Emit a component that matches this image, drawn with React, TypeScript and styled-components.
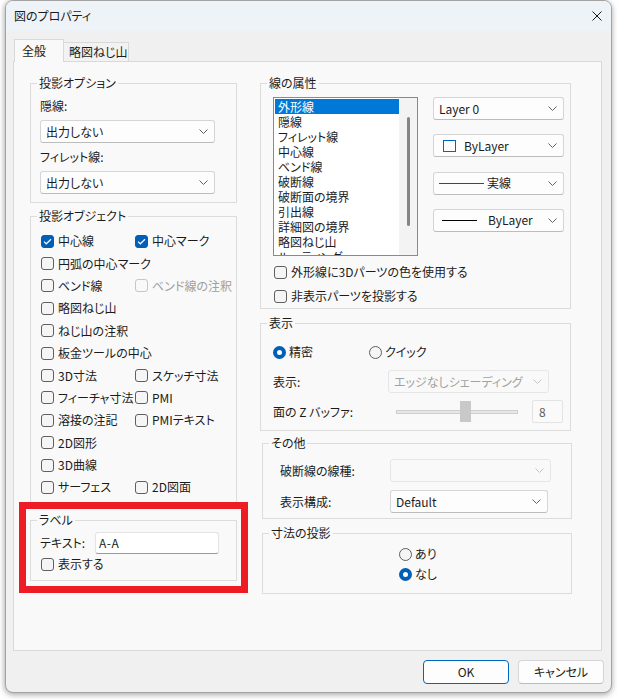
import styled, { createGlobalStyle } from 'styled-components';

const GlobalStyle = createGlobalStyle`
  html, body {
    margin: 0;
    padding: 0;
    background: #ffffff;
  }
  body {
    font-family: "Noto Sans CJK JP", "Noto Sans", sans-serif;
    font-size: 12px;
    line-height: 16px;
    color: #1b1b1b;
    font-feature-settings: "palt";
  }
  *, *::before, *::after {
    box-sizing: border-box;
  }
`;

const lineItems = [
  '外形線',
  '隠線',
  'フィレット線',
  '中心線',
  'ベンド線',
  '破断線',
  '破断面の境界',
  '引出線',
  '詳細図の境界',
  '略図ねじ山',
  'ルーティング',
];

type CheckItem = { text: string; checked?: boolean; disabled?: boolean; wide?: boolean };

const objectItems: CheckItem[] = [
  { text: '中心線', checked: true },
  { text: '中心マーク', checked: true },
  { text: '円弧の中心マーク', wide: true },
  { text: 'ベンド線' },
  { text: 'ベンド線の注釈', disabled: true },
  { text: '略図ねじ山', wide: true },
  { text: 'ねじ山の注釈', wide: true },
  { text: '板金ツールの中心', wide: true },
  { text: '3D寸法' },
  { text: 'スケッチ寸法' },
  { text: 'フィーチャ寸法' },
  { text: 'PMI' },
  { text: '溶接の注記' },
  { text: 'PMIテキスト' },
  { text: '2D図形', wide: true },
  { text: '3D曲線', wide: true },
  { text: 'サーフェス' },
  { text: '2D図面' },
];

const Chevron = ({ disabled }: { disabled?: boolean }) => (
  <ChevronIcon width="9" height="5" viewBox="0 0 9 5">
    <path d="M0.5 0.5 L4.5 4.5 L8.5 0.5" fill="none" stroke={disabled ? '#c4c4c4' : '#606060'} strokeWidth="1" />
  </ChevronIcon>
);

const Check = ({ text, checked, disabled, wide }: CheckItem) => (
  <CheckLabel $disabled={disabled} $wide={wide}>
    <CheckBox $checked={checked} $disabled={disabled}>
      {checked && (
        <svg width="9" height="7" viewBox="0 0 9 7">
          <path d="M1 3.6 L3.3 5.8 L8 1.2" fill="none" stroke="#ffffff" strokeWidth="1.2" />
        </svg>
      )}
    </CheckBox>
    {text}
  </CheckLabel>
);

const Radio = ({ text, checked }: { text: string; checked?: boolean }) => (
  <RadioLabel>
    <RadioDot $checked={checked} />
    {text}
  </RadioLabel>
);

const App = () => {
  return (
    <>
      <GlobalStyle />
      <Screen>
        <Window>
          <TitleBar>
            <Title>図のプロパティ</Title>
            <CloseButton>
              <svg width="10" height="10" viewBox="0 0 10 10">
                <path d="M0.5 0.5 L9.5 9.5 M9.5 0.5 L0.5 9.5" stroke="#1b1b1b" strokeWidth="1" />
              </svg>
            </CloseButton>
          </TitleBar>
          <Body>
            <TabArea>
              <TabBar>
                <Tab $active>全般</Tab>
                <Tab>略図ねじ山</Tab>
              </TabBar>
              <Panel>
                <Column>
                  <Group $height={128}>
                    <Legend>投影オプション</Legend>
                    <OptionsBody>
                      <FieldLabel>隠線:</FieldLabel>
                      <Select $width={175}>
                        出力しない
                        <Chevron />
                      </Select>
                      <FieldLabel>フィレット線:</FieldLabel>
                      <Select $width={175}>
                        出力しない
                        <Chevron />
                      </Select>
                    </OptionsBody>
                  </Group>
                  <Group $height={296} $mt={5}>
                    <Legend>投影オブジェクト</Legend>
                    <ObjectGrid>
                      {objectItems.map((item) => (
                        <Check key={item.text} {...item} />
                      ))}
                    </ObjectGrid>
                  </Group>
                  <Group $height={69} $mt={8}>
                    <Legend>ラベル</Legend>
                    <LabelBody>
                      <InlineRow>
                        <InlineLabel $width={55}>テキスト:</InlineLabel>
                        <TextInput>A-A</TextInput>
                      </InlineRow>
                      <Check text="表示する" />
                    </LabelBody>
                  </Group>
                </Column>

                <Column>
                  <Group $height={234} $width={311}>
                    <Legend>線の属性</Legend>
                    <LineBody>
                      <LineTop>
                        <ListBox>
                          <ListItems>
                            {lineItems.map((item, i) => (
                              <ListItem key={item} $selected={i === 0}>
                                {item}
                              </ListItem>
                            ))}
                          </ListItems>
                          <ScrollTrack>
                            <ScrollThumb />
                          </ScrollTrack>
                        </ListBox>
                        <DropColumn>
                          <Select $width={131}>
                            Layer 0
                            <Chevron />
                          </Select>
                          <Select $width={131}>
                            <ColorSwatch />
                            <SelectText $ml={8}>ByLayer</SelectText>
                            <Chevron />
                          </Select>
                          <Select $width={131} $pl={5}>
                            <LineSwatch $color="#e60012" $length={45} />
                            <SelectText $ml={3}>実線</SelectText>
                            <Chevron />
                          </Select>
                          <Select $width={131} $pl={8}>
                            <LineSwatch $color="#000000" $length={35} />
                            <SelectText $ml={11}>ByLayer</SelectText>
                            <Chevron />
                          </Select>
                        </DropColumn>
                      </LineTop>
                      <CheckStack>
                        <Check text="外形線に3Dパーツの色を使用する" />
                        <Check text="非表示パーツを投影する" />
                      </CheckStack>
                    </LineBody>
                  </Group>

                  <Group $height={116} $mt={6} $width={311}>
                    <Legend>表示</Legend>
                    <DisplayBody>
                      <RadioRow>
                        <RadioCell $width={96}>
                          <Radio text="精密" checked />
                        </RadioCell>
                        <Radio text="クイック" />
                      </RadioRow>
                      <FormRow $label={115} $mt={10}>
                        <span>表示:</span>
                        <Select $width={161} $disabled>
                          エッジなしシェーディング
                          <Chevron disabled />
                        </Select>
                      </FormRow>
                      <FormRow $label={115} $mt={7}>
                        <span>面の Z バッファ:</span>
                        <SliderRow>
                          <SliderTrack>
                            <SliderThumb />
                          </SliderTrack>
                          <SpinBox>8</SpinBox>
                        </SliderRow>
                      </FormRow>
                    </DisplayBody>
                  </Group>

                  <Group $height={84} $mt={4} $width={310} $ml={2}>
                    <Legend>その他</Legend>
                    <OtherBody>
                      <FormRow $label={110}>
                        <span>破断線の線種:</span>
                        <Select $width={161} $disabled>
                          <Chevron disabled />
                        </Select>
                      </FormRow>
                      <FormRow $label={110} $mt={8}>
                        <span>表示構成:</span>
                        <Select $width={158}>
                          Default
                          <Chevron />
                        </Select>
                      </FormRow>
                    </OtherBody>
                  </Group>

                  <Group $height={69} $mt={6} $width={310} $ml={2}>
                    <Legend>寸法の投影</Legend>
                    <DimensionBody>
                      <Radio text="あり" />
                      <Radio text="なし" checked />
                    </DimensionBody>
                  </Group>
                </Column>
              </Panel>
            </TabArea>
            <Footer>
              <Button $primary>OK</Button>
              <Button>キャンセル</Button>
            </Footer>
          </Body>
        </Window>
        <Highlight />
      </Screen>
    </>
  );
};
export default App;

const Screen = styled.div`
  position: relative;
  width: 617px;
  height: 699px;
  padding-left: 5px;
  overflow: hidden;
  background: #ffffff;
`;

const Window = styled.div`
  width: 607px;
  height: 693px;
  display: flex;
  flex-direction: column;
  border: 1px solid #a3a3a3;
  border-radius: 8px;
  overflow: hidden;
  background: #f0f0f0;
  box-shadow: 0 2px 6px rgba(0, 0, 0, 0.28), -1px 0 5px rgba(0, 0, 0, 0.12);
`;

const TitleBar = styled.div`
  height: 30px;
  flex-shrink: 0;
  display: flex;
  align-items: center;
  justify-content: space-between;
  padding-left: 8px;
  background: #eef3f7;
`;

const Title = styled.span`
  font-size: 12px;
  color: #1b1b1b;
`;

const CloseButton = styled.div`
  width: 28px;
  height: 30px;
  display: flex;
  align-items: center;
  justify-content: center;
`;

const Body = styled.div`
  flex: 1;
  display: flex;
  flex-direction: column;
`;

const TabArea = styled.div`
  padding: 8px 9px 0 7px;
`;

const TabBar = styled.div`
  height: 22px;
  display: flex;
  align-items: flex-end;
  padding-left: 1px;
`;

const Tab = styled.div<{ $active?: boolean }>`
  position: relative;
  z-index: ${(p) => (p.$active ? 1 : 0)};
  height: ${(p) => (p.$active ? '23px' : '19px')};
  margin-bottom: ${(p) => (p.$active ? '-1px' : '0')};
  width: ${(p) => (p.$active ? '50px' : '65px')};
  padding-left: ${(p) => (p.$active ? '7px' : '5px')};
  padding-top: ${(p) => (p.$active ? '3px' : '1px')};
  border: 1px solid #d9d9d9;
  border-bottom: none;
  border-left: ${(p) => (p.$active ? '1px solid #d9d9d9' : 'none')};
  background: ${(p) => (p.$active ? '#f9f9f9' : '#f2f2f2')};
  font-size: 12px;
  line-height: 16px;
  white-space: nowrap;
`;

const Panel = styled.div`
  height: 590px;
  border: 1px solid #d9d9d9;
  background: #f9f9f9;
  padding: 13px 29px 0 16px;
  display: grid;
  grid-template-columns: 207px 312px;
  column-gap: 23px;
  align-items: start;
`;

const Column = styled.div`
  display: flex;
  flex-direction: column;
`;

const Group = styled.fieldset<{ $height: number; $mt?: number; $width?: number; $ml?: number }>`
  margin: ${(p) => p.$mt ?? 0}px 0 0 ${(p) => p.$ml ?? 0}px;
  padding: 0;
  min-width: 0;
  width: ${(p) => (p.$width ? `${p.$width}px` : 'auto')};
  height: ${(p) => p.$height}px;
  border: 1px solid #dcdcdc;
  border-radius: 0;
`;

const Legend = styled.legend`
  margin-left: 6px;
  padding: 0 2px;
  font-size: 12px;
  line-height: 16px;
  color: #1b1b1b;
`;

const OptionsBody = styled.div`
  display: flex;
  flex-direction: column;
  align-items: flex-start;
  gap: 6px;
  padding: 7px 0 0 9px;
`;

const FieldLabel = styled.span`
  display: block;
  line-height: 16px;
`;

const Select = styled.div<{ $width: number; $disabled?: boolean; $pl?: number }>`
  width: ${(p) => p.$width}px;
  height: 23px;
  flex-shrink: 0;
  display: flex;
  align-items: center;
  padding-left: ${(p) => p.$pl ?? 5}px;
  border: 1px solid ${(p) => (p.$disabled ? '#e6e6e6' : '#d5d5d5')};
  border-bottom-color: ${(p) => (p.$disabled ? '#e6e6e6' : '#bcbcbc')};
  border-radius: 3px;
  background: ${(p) => (p.$disabled ? '#f9f9f9' : '#fdfdfd')};
  color: ${(p) => (p.$disabled ? '#a2a2a2' : '#1b1b1b')};
  white-space: nowrap;
`;

const SelectText = styled.span<{ $ml: number }>`
  margin-left: ${(p) => p.$ml}px;
`;

const ChevronIcon = styled.svg`
  margin-left: auto;
  margin-right: 6px;
  flex-shrink: 0;
`;

const ObjectGrid = styled.div`
  display: grid;
  grid-template-columns: 94px auto;
  grid-auto-rows: 22.4px;
  align-items: center;
  padding: 6px 0 0 9px;
`;

const CheckLabel = styled.label<{ $disabled?: boolean; $wide?: boolean }>`
  display: flex;
  align-items: center;
  gap: 4px;
  height: 16px;
  white-space: nowrap;
  color: ${(p) => (p.$disabled ? '#a0a0a0' : '#1b1b1b')};
  grid-column: ${(p) => (p.$wide ? 'span 2' : 'auto')};
`;

const CheckBox = styled.span<{ $checked?: boolean; $disabled?: boolean }>`
  width: 13px;
  height: 13px;
  margin-left: 1px;
  flex-shrink: 0;
  display: flex;
  align-items: center;
  justify-content: center;
  border-radius: 3px;
  border: 1px solid ${(p) => (p.$checked ? '#005fb8' : p.$disabled ? '#c6c6c6' : '#5f5f5f')};
  background: ${(p) => (p.$checked ? '#005fb8' : p.$disabled ? '#f9f9f9' : '#f5f5f5')};
`;

const LabelBody = styled.div`
  display: flex;
  flex-direction: column;
  gap: 2px;
  padding: 4px 0 0 9px;
`;

const InlineRow = styled.div`
  display: flex;
  align-items: center;
`;

const InlineLabel = styled.span<{ $width: number }>`
  width: ${(p) => p.$width}px;
  flex-shrink: 0;
`;

const TextInput = styled.div`
  width: 124px;
  height: 22px;
  display: flex;
  align-items: center;
  padding-left: 3px;
  background: #ffffff;
  border: 1px solid #e3e3e3;
  border-bottom-color: #9a9a9a;
  border-radius: 3px;
  font-size: 12px;
  letter-spacing: 0.5px;
`;

const LineBody = styled.div`
  padding: 6px 0 0 12px;
`;

const LineTop = styled.div`
  display: flex;
  gap: 15px;
`;

const ListBox = styled.div`
  width: 145px;
  height: 159px;
  display: flex;
  border: 1px solid #8a8a8a;
  background: #ffffff;
  overflow: hidden;
`;

const ListItems = styled.div`
  width: 125px;
  padding: 1px 0 0 1px;
`;

const ListItem = styled.div<{ $selected?: boolean }>`
  height: 15px;
  line-height: 15px;
  padding-left: 3px;
  white-space: nowrap;
  background: ${(p) => (p.$selected ? '#0078d7' : 'transparent')};
  color: ${(p) => (p.$selected ? '#ffffff' : '#1b1b1b')};
`;

const ScrollTrack = styled.div`
  flex: 1;
  display: flex;
  justify-content: center;
  padding-top: 19px;
  background: #f3f3f3;
`;

const ScrollThumb = styled.div`
  width: 3px;
  height: 109px;
  border-radius: 2px;
  background: #858585;
`;

const DropColumn = styled.div`
  display: flex;
  flex-direction: column;
  gap: 14.33px;
`;

const ColorSwatch = styled.span`
  width: 13px;
  height: 12px;
  margin-left: 4px;
  border: 1.5px solid #0067c0;
  flex-shrink: 0;
`;

const LineSwatch = styled.span<{ $color: string; $length: number }>`
  width: ${(p) => p.$length}px;
  height: 1px;
  flex-shrink: 0;
  background: ${(p) => p.$color};
`;

const CheckStack = styled.div`
  display: flex;
  flex-direction: column;
  gap: 8px;
  margin-top: 8px;
`;

const DisplayBody = styled.div`
  padding: 13px 0 0 12px;
`;

const RadioRow = styled.div`
  display: flex;
  align-items: center;
  height: 16px;
`;

const RadioCell = styled.div<{ $width: number }>`
  width: ${(p) => p.$width}px;
`;

const RadioLabel = styled.label`
  display: flex;
  align-items: center;
  gap: 3px;
  height: 16px;
  white-space: nowrap;
`;

const RadioDot = styled.span<{ $checked?: boolean }>`
  width: 13px;
  height: 13px;
  flex-shrink: 0;
  border-radius: 50%;
  border: ${(p) => (p.$checked ? '4px solid #005fb8' : '1px solid #5f5f5f')};
  background: ${(p) => (p.$checked ? '#ffffff' : '#f5f5f5')};
`;

const FormRow = styled.div<{ $label: number; $mt?: number }>`
  display: grid;
  grid-template-columns: ${(p) => p.$label}px auto;
  align-items: center;
  margin-top: ${(p) => p.$mt ?? 0}px;
  white-space: nowrap;
`;

const SliderRow = styled.div`
  display: flex;
  align-items: center;
  padding-left: 8px;
  gap: 14px;
`;

const SliderTrack = styled.div`
  width: 122px;
  height: 4px;
  display: flex;
  align-items: center;
  padding-left: 63px;
  border: 1px solid #cfcfcf;
  background: #e7e7e7;
`;

const SliderThumb = styled.div`
  width: 11px;
  height: 21px;
  flex-shrink: 0;
  background: #c9c9c9;
`;

const SpinBox = styled.div`
  width: 31px;
  height: 23px;
  display: flex;
  align-items: center;
  padding-left: 6px;
  border: 1px solid #e3e3e3;
  border-radius: 2px;
  background: #fafafa;
  color: #5a5a5a;
`;

const OtherBody = styled.div`
  padding: 8px 0 0 17px;
`;

const DimensionBody = styled.div`
  display: flex;
  flex-direction: column;
  gap: 4px;
  padding: 5px 0 0 136px;
`;

const Footer = styled.div`
  flex: 1;
  display: flex;
  justify-content: flex-end;
  align-items: flex-start;
  gap: 9px;
  padding: 9px 7px 0 0;
`;

const Button = styled.div<{ $primary?: boolean }>`
  width: 86px;
  height: 24px;
  display: flex;
  align-items: center;
  justify-content: center;
  border-radius: 4px;
  border: 1px solid ${(p) => (p.$primary ? '#0067c0' : '#d5d5d5')};
  border-bottom-color: ${(p) => (p.$primary ? '#0067c0' : '#bcbcbc')};
  background: #fdfdfd;
  font-size: 12px;
  color: #1b1b1b;
`;

const Highlight = styled.div`
  position: absolute;
  left: 19px;
  top: 502px;
  width: 229px;
  height: 91px;
  border: 7px solid #ed1c24;
  pointer-events: none;
`;
